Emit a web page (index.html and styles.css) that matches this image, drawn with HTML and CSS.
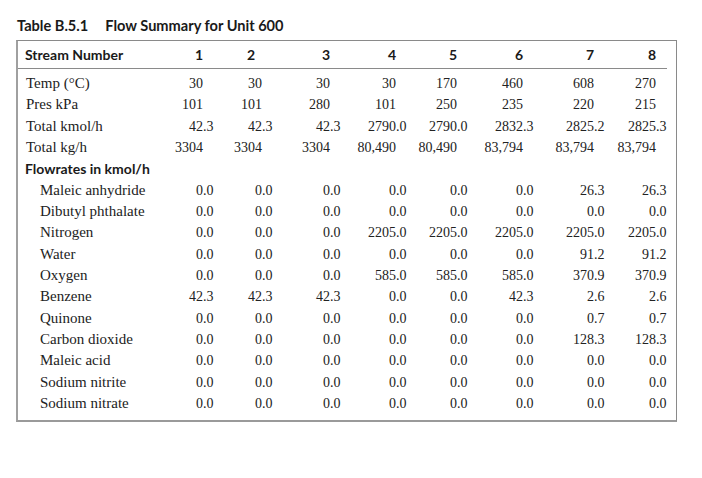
FILE: index.html
```html
<!DOCTYPE html>
<html>
<head>
<meta charset="utf-8">
<link rel="stylesheet" href="styles.css">
</head>
<body>
<div class="title"><span class="tnum">Table B.5.1</span><span>Flow Summary for Unit 600</span></div>
<div class="box">
<table class="flow">
<colgroup>
<col class="c-label"><col class="c1"><col class="c2"><col class="c3"><col class="c4"><col class="c5"><col class="c6"><col class="c7"><col class="c8">
</colgroup>
<thead>
<tr><th class="lbl">Stream Number</th><th>1</th><th class="h2">2</th><th>3</th><th>4</th><th>5</th><th>6</th><th>7</th><th>8</th></tr>
</thead>
<tbody>
<tr class="gap-top"><td colspan="9"></td></tr>
<tr><td class="lbl">Temp (°C)</td><td>30<span class="d"></span></td><td>30<span class="d"></span></td><td>30<span class="d"></span></td><td>30<span class="d"></span></td><td>170<span class="d"></span></td><td>460<span class="d"></span></td><td>608<span class="d"></span></td><td>270<span class="d"></span></td></tr>
<tr><td class="lbl">Pres kPa</td><td>101<span class="d"></span></td><td>101<span class="d"></span></td><td>280<span class="d"></span></td><td>101<span class="d"></span></td><td>250<span class="d"></span></td><td>235<span class="d"></span></td><td>220<span class="d"></span></td><td>215<span class="d"></span></td></tr>
<tr><td class="lbl">Total kmol/h</td><td>42<span class="d">.3</span></td><td>42<span class="d">.3</span></td><td>42<span class="d">.3</span></td><td>2790<span class="d">.0</span></td><td>2790<span class="d">.0</span></td><td>2832<span class="d">.3</span></td><td>2825<span class="d">.2</span></td><td>2825<span class="d">.3</span></td></tr>
<tr><td class="lbl">Total kg/h</td><td>3304<span class="d"></span></td><td>3304<span class="d"></span></td><td>3304<span class="d"></span></td><td>80,490<span class="d"></span></td><td>80,490<span class="d"></span></td><td>83,794<span class="d"></span></td><td>83,794<span class="d"></span></td><td>83,794<span class="d"></span></td></tr>
<tr><td class="lbl sect" colspan="9">Flowrates in kmol/h</td></tr>
<tr><td class="lbl ind">Maleic anhydride</td><td>0<span class="d">.0</span></td><td>0<span class="d">.0</span></td><td>0<span class="d">.0</span></td><td>0<span class="d">.0</span></td><td>0<span class="d">.0</span></td><td>0<span class="d">.0</span></td><td>26<span class="d">.3</span></td><td>26<span class="d">.3</span></td></tr>
<tr><td class="lbl ind">Dibutyl phthalate</td><td>0<span class="d">.0</span></td><td>0<span class="d">.0</span></td><td>0<span class="d">.0</span></td><td>0<span class="d">.0</span></td><td>0<span class="d">.0</span></td><td>0<span class="d">.0</span></td><td>0<span class="d">.0</span></td><td>0<span class="d">.0</span></td></tr>
<tr><td class="lbl ind">Nitrogen</td><td>0<span class="d">.0</span></td><td>0<span class="d">.0</span></td><td>0<span class="d">.0</span></td><td>2205<span class="d">.0</span></td><td>2205<span class="d">.0</span></td><td>2205<span class="d">.0</span></td><td>2205<span class="d">.0</span></td><td>2205<span class="d">.0</span></td></tr>
<tr><td class="lbl ind">Water</td><td>0<span class="d">.0</span></td><td>0<span class="d">.0</span></td><td>0<span class="d">.0</span></td><td>0<span class="d">.0</span></td><td>0<span class="d">.0</span></td><td>0<span class="d">.0</span></td><td>91<span class="d">.2</span></td><td>91<span class="d">.2</span></td></tr>
<tr><td class="lbl ind">Oxygen</td><td>0<span class="d">.0</span></td><td>0<span class="d">.0</span></td><td>0<span class="d">.0</span></td><td>585<span class="d">.0</span></td><td>585<span class="d">.0</span></td><td>585<span class="d">.0</span></td><td>370<span class="d">.9</span></td><td>370<span class="d">.9</span></td></tr>
<tr><td class="lbl ind">Benzene</td><td>42<span class="d">.3</span></td><td>42<span class="d">.3</span></td><td>42<span class="d">.3</span></td><td>0<span class="d">.0</span></td><td>0<span class="d">.0</span></td><td>42<span class="d">.3</span></td><td>2<span class="d">.6</span></td><td>2<span class="d">.6</span></td></tr>
<tr><td class="lbl ind">Quinone</td><td>0<span class="d">.0</span></td><td>0<span class="d">.0</span></td><td>0<span class="d">.0</span></td><td>0<span class="d">.0</span></td><td>0<span class="d">.0</span></td><td>0<span class="d">.0</span></td><td>0<span class="d">.7</span></td><td>0<span class="d">.7</span></td></tr>
<tr><td class="lbl ind">Carbon dioxide</td><td>0<span class="d">.0</span></td><td>0<span class="d">.0</span></td><td>0<span class="d">.0</span></td><td>0<span class="d">.0</span></td><td>0<span class="d">.0</span></td><td>0<span class="d">.0</span></td><td>128<span class="d">.3</span></td><td>128<span class="d">.3</span></td></tr>
<tr><td class="lbl ind">Maleic acid</td><td>0<span class="d">.0</span></td><td>0<span class="d">.0</span></td><td>0<span class="d">.0</span></td><td>0<span class="d">.0</span></td><td>0<span class="d">.0</span></td><td>0<span class="d">.0</span></td><td>0<span class="d">.0</span></td><td>0<span class="d">.0</span></td></tr>
<tr><td class="lbl ind">Sodium nitrite</td><td>0<span class="d">.0</span></td><td>0<span class="d">.0</span></td><td>0<span class="d">.0</span></td><td>0<span class="d">.0</span></td><td>0<span class="d">.0</span></td><td>0<span class="d">.0</span></td><td>0<span class="d">.0</span></td><td>0<span class="d">.0</span></td></tr>
<tr><td class="lbl ind">Sodium nitrate</td><td>0<span class="d">.0</span></td><td>0<span class="d">.0</span></td><td>0<span class="d">.0</span></td><td>0<span class="d">.0</span></td><td>0<span class="d">.0</span></td><td>0<span class="d">.0</span></td><td>0<span class="d">.0</span></td><td>0<span class="d">.0</span></td></tr>
<tr class="gap-bot"><td colspan="9"></td></tr>
</tbody>
</table>
</div>
</body>
</html>
```

FILE: styles.css
```css
html, body {
  margin: 0;
  padding: 0;
  background: #ffffff;
}

body {
  color: #222222;
}

.title {
  font-family: Lato, "Open Sans", sans-serif;
  font-weight: 700;
  font-size: 14.6px;
  line-height: 18px;
  padding: 17px 0 0 17px;
  color: #1a1a1a;
  display: flex;
  gap: 17px;
}

.box {
  margin: 5px 0 0 16px;
  width: 658px;
  border-top: 1px solid #8a8a8a;
  border-left: 2px solid #a0a0a0;
  border-right: 1px solid #8a8a8a;
  border-bottom: 2px solid #9a9a9a;
  box-sizing: content-box;
}

.flow {
  border-collapse: collapse;
  table-layout: fixed;
  width: 649px;
}

.c-label { width: 142px; }
.c1 { width: 54px; }
.c2 { width: 59px; }
.c3 { width: 68px; }
.c4 { width: 66px; }
.c5 { width: 61px; }
.c6 { width: 66px; }
.c7 { width: 71px; }
.c8 { width: 62px; }

.flow th {
  font-family: Lato, "Open Sans", sans-serif;
  font-weight: 700;
  font-size: 14px;
  height: 27px;
  padding: 0 11px 0 0;
  text-align: right;
  border-bottom: 1px solid #8a8a8a;
  color: #1a1a1a;
  white-space: nowrap;
}

.flow th.h2 {
  padding-right: 18px;
}

.flow th.lbl {
  text-align: left;
  padding-left: 7px;
}

.flow td {
  font-family: "Liberation Serif", "Times New Roman", serif;
  font-size: 14px;
  height: 21.33px;
  line-height: 21px;
  padding: 0;
  text-align: right;
  white-space: nowrap;
}

.flow td.lbl {
  text-align: left;
  padding-left: 8px;
  font-size: 15px;
}

.flow td.ind {
  padding-left: 22px;
}

.flow td.sect {
  font-family: Lato, "Open Sans", sans-serif;
  font-weight: 700;
  font-size: 14px;
  padding-left: 7px;
  color: #1a1a1a;
}

.d {
  display: inline-block;
  width: 11px;
  text-align: left;
}

.gap-top td {
  height: 4px;
  line-height: 0;
}

.gap-bot td {
  height: 6px;
  line-height: 0;
}
```
